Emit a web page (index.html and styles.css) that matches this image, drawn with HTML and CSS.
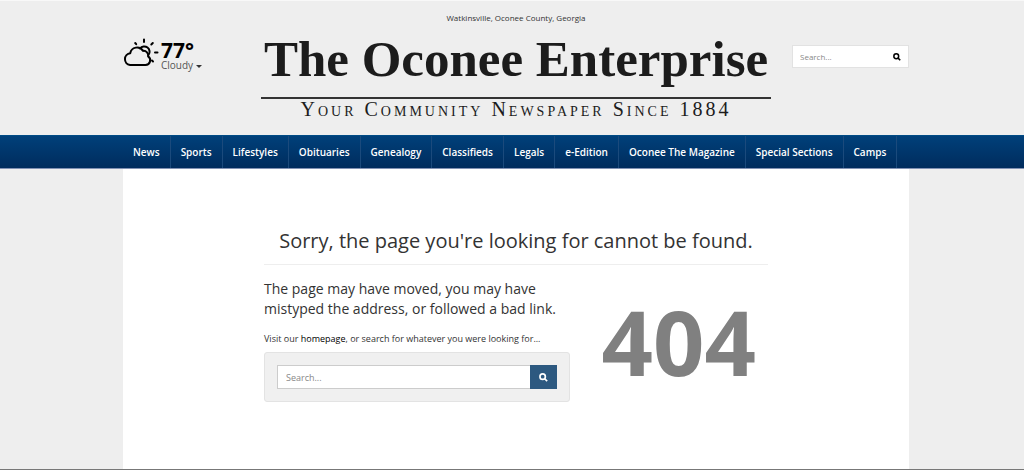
FILE: index.html
```html
<!DOCTYPE html>
<html lang="en">
<head>
  <meta charset="utf-8">
  <meta name="viewport" content="width=device-width, initial-scale=1">
  <title>The Oconee Enterprise</title>
  <link rel="stylesheet" href="styles.css">
</head>
<body>
  <header class="header">
    <div class="container header-row">
      <div class="weather">
        <svg class="weather-icon" viewBox="0 0 36 30" aria-hidden="true">
          <path d="M7 27h15.500a4.700 4.700 0 0 0 2.600-8.600 4.600 4.600 0 0 0-5-5.500 7 7 0 0 0-12.900 2.400A5.900 5.900 0 0 0 7 27z"/>
          <path d="M17 10.500a5.300 5.300 0 1 1 8.500 6.500M21 1.500v2.500M12.200 5l1 1.200M29.800 5l-1.500 1.500M32 14.500h2.500M29 22.500l1 1"/>
        </svg>
        <div class="weather-text">
          <strong class="temp">77°</strong>
          <button class="condition" type="button">Cloudy <span class="caret"></span></button>
        </div>
      </div>
      <div class="brand">
        <p class="place">Watkinsville, Oconee County, Georgia</p>
        <a class="logo" href="#">
          <span class="logo-name">The Oconee Enterprise</span>
          <span class="logo-tag">Your Community Newspaper Since 1884</span>
        </a>
      </div>
      <form class="top-search">
        <input type="text" placeholder="Search..." aria-label="Search">
        <button type="button" aria-label="Search">
          <svg class="search-icon" viewBox="0 0 16 16" aria-hidden="true"><circle cx="6.500" cy="6.500" r="4.800"/><path d="M10.200 10.200l4.300 4.300"/></svg>
        </button>
      </form>
    </div>
  </header>

  <nav class="nav">
    <ul class="container nav-list">
      <li><a href="#">News</a></li>
      <li><a href="#">Sports</a></li>
      <li><a href="#">Lifestyles</a></li>
      <li><a href="#">Obituaries</a></li>
      <li><a href="#">Genealogy</a></li>
      <li><a href="#">Classifieds</a></li>
      <li><a href="#">Legals</a></li>
      <li><a href="#">e-Edition</a></li>
      <li><a href="#">Oconee The Magazine</a></li>
      <li><a href="#">Special Sections</a></li>
      <li><a href="#">Camps</a></li>
    </ul>
  </nav>

  <main class="main">
    <div class="container content">
      <div class="error">
        <h1>Sorry, the page you're looking for cannot be found.</h1>
        <div class="error-row">
          <div class="error-text">
            <h2>The page may have moved, you may have mistyped the address, or followed a bad link.</h2>
            <p>Visit our <a href="#">homepage</a>, or search for whatever you were looking for...</p>
            <form class="well">
              <input type="text" placeholder="Search..." aria-label="Search the site">
              <button type="button" aria-label="Search the site">
                <svg class="search-icon" viewBox="0 0 16 16" aria-hidden="true"><circle cx="6.500" cy="6.500" r="4.800"/><path d="M10.200 10.200l4.300 4.300"/></svg>
              </button>
            </form>
          </div>
          <div class="error-code">404</div>
        </div>
      </div>
    </div>
  </main>
  <footer class="footer"></footer>
</body>
</html>
```

FILE: styles.css
```css
* {
  box-sizing: border-box;
}
body {
  margin: 0;
  min-height: 100vh;
  display: flex;
  flex-direction: column;
  background: #eee;
  color: #333;
  font-family: "Open Sans", Arial, sans-serif;
  font-size: 10px;
}
input, button {
  font-family: inherit;
  margin: 0;
}
.header, .nav, .main {
  padding-left: 8px;
}
.container {
  width: 100%;
  max-width: 786px;
  margin: 0 auto;
}

/* header */
.header {
  border-top: 1px solid #f8f8f8;
  padding-top: 10px;
  padding-bottom: 16px;
}
.header-row {
  display: grid;
  grid-template-columns: 1fr 510px 1fr;
}
.weather {
  display: flex;
  gap: 2px;
  padding-top: 27px;
}
.weather-icon {
  width: 36px;
  height: 30px;
  fill: none;
  stroke: #000;
  stroke-width: 2;
  stroke-linecap: round;
  stroke-linejoin: round;
}
.weather-text {
  padding-top: 2px;
}
.temp {
  display: block;
  color: #000;
  font-size: 21px;
  line-height: 20px;
}
.condition {
  display: block;
  padding: 0;
  border: 0;
  background: none;
  color: #555;
  font-size: 10px;
  line-height: 11px;
  white-space: nowrap;
}
.caret {
  display: inline-block;
  vertical-align: middle;
  border-top: 3px solid #333;
  border-left: 3px solid transparent;
  border-right: 3px solid transparent;
}
.brand {
  text-align: center;
}
.place {
  margin: 0;
  font-size: 8px;
  line-height: 14px;
}
.logo {
  display: block;
  color: #1c1c1c;
  font-family: "Old English Text MT", "Liberation Serif", "Times New Roman", serif;
  text-decoration: none;
}
.logo-name {
  display: block;
  padding-bottom: 4px;
  border-bottom: 2px solid #333;
  font-size: 51px;
  font-weight: bold;
  line-height: 68px;
  white-space: nowrap;
}
.logo-tag {
  display: block;
  font-family: "Liberation Serif", "Times New Roman", serif;
  font-size: 20px;
  font-variant: small-caps;
  letter-spacing: 3px;
  line-height: 20px;
  white-space: nowrap;
}
.top-search {
  display: flex;
  justify-self: end;
  align-self: start;
  width: 117px;
  height: 23px;
  margin-top: 34px;
  border: 1px solid #e2e2e2;
  background: #fff;
}
.top-search input {
  flex: 1;
  min-width: 0;
  padding: 0 7px;
  border: 0;
  background: none;
  font-size: 8px;
}
.top-search button {
  display: flex;
  align-items: center;
  padding: 0 7px;
  border: 0;
  background: none;
}
input::placeholder {
  color: #888;
}
.search-icon {
  width: 8px;
  height: 8px;
  fill: none;
  stroke: #000;
  stroke-width: 3;
}

/* navigation */
.nav {
  border-top: 1px solid #004b85;
  border-bottom: 1px solid #8191b3;
  background: linear-gradient(#00407a, #002c5d);
}
.nav-list {
  display: flex;
  padding: 0;
  list-style: none;
}
.nav-list li {
  border-right: 1px solid #1b4a7c;
}
.nav-list a {
  display: block;
  padding: 0 10px;
  color: #fff;
  font-size: 10px;
  font-weight: 600;
  line-height: 32px;
  text-decoration: none;
  white-space: nowrap;
}

/* error page */
.main {
  flex: 1;
  display: flex;
}
.content {
  padding: 57px 20px;
  background: #fff;
}
.error {
  max-width: 504px;
  margin: 0 auto;
}
.error h1 {
  margin: 0 0 14px;
  padding-bottom: 8px;
  border-bottom: 1px solid #eee;
  font-size: 20px;
  font-weight: 400;
  line-height: 30px;
  text-align: center;
}
.error-row {
  display: flex;
  gap: 32px;
}
.error-text {
  flex: 1;
}
.error h2 {
  margin: 0 0 12px;
  font-size: 14px;
  font-weight: 400;
  line-height: 20px;
}
.error p {
  margin: 0 0 6px;
  font-size: 9px;
  line-height: 15px;
}
.error p a {
  color: #000;
  text-decoration: none;
}
.well {
  display: flex;
  padding: 12px;
  border: 1px solid #e3e3e3;
  border-radius: 3px;
  background: #f0f0f0;
}
.well input {
  flex: 1;
  min-width: 0;
  height: 24px;
  padding: 0 8px;
  border: 1px solid #ccc;
  border-right: 0;
  background: #fff;
  font-size: 9px;
}
.well button {
  display: flex;
  align-items: center;
  padding: 0 9px;
  border: 0;
  background: #2d5980;
}
.well .search-icon {
  width: 9px;
  height: 9px;
  stroke: #fff;
}
.error-code {
  padding-right: 12px;
  color: #808080;
  font-size: 90px;
  font-weight: 700;
  line-height: 124px;
}
.footer {
  border-top: 1px solid #777;
}
```
